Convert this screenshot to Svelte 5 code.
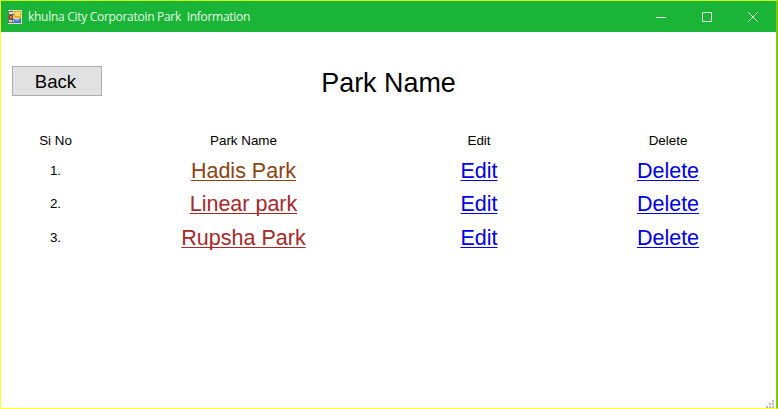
<script>
  const parks = [
    { name: 'Hadis Park', color: '#8b4513', height: 33 },
    { name: 'Linear park', color: '#a52a2a', height: 34 },
    { name: 'Rupsha Park', color: '#a52a2a', height: 33 }
  ];
</script>

<div class="window">
  <header class="titlebar">
    <svg class="app-icon" width="14" height="14" viewBox="0 0 14 14" shape-rendering="crispEdges">
      <rect width="14" height="14" fill="#d5dccb" />
      <path d="M0 1.5H5M.5 1V13M0 4.5H6M0 9.5H6M4.5 9V13M0 12.5H13M12.5 8V13" stroke="#60765a" fill="none" />
      <rect x="1" y="5" width="4" height="4" fill="#b52d20" />
      <rect x="2" y="6" width="2" height="2" fill="#ed7860" />
      <rect x="6" y="1" width="7" height="7" fill="#e9ad20" />
      <rect x="7" y="2" width="5" height="4" fill="#ffda65" />
      <rect x="6" y="9" width="6" height="4" fill="#4270d2" />
      <rect x="7" y="9" width="4" height="2" fill="#86a9f2" />
    </svg>
    <span class="title">khulna City Corporatoin Park&nbsp; Information</span>
    <div class="controls">
      <svg width="10" height="10" viewBox="0 0 10 10"><path d="M0 5.5H10" /></svg>
      <svg width="10" height="10" viewBox="0 0 10 10"><path d="M.5 .5H9.5V9.5H.5Z" /></svg>
      <svg width="10" height="10" viewBox="0 0 10 10"><path d="M.3 .3L9.7 9.7M9.7 .3L.3 9.7" /></svg>
    </div>
  </header>
  <main>
    <div class="top">
      <button>Back</button>
      <h1>Park Name</h1>
    </div>
    <div class="row head">
      <span>Si No</span><span>Park Name</span><span>Edit</span><span>Delete</span>
    </div>
    {#each parks as park, i}
      <div class="row" style:height="{park.height}px">
        <span class="num">{i + 1}.</span>
        <span><a href="#park" style:color={park.color}>{park.name}</a></span>
        <span><a href="#edit">Edit</a></span>
        <span><a href="#delete">Delete</a></span>
      </div>
    {/each}
  </main>
  <svg class="grip" width="8" height="8" viewBox="0 0 8 8" fill="#b8b8b8" shape-rendering="crispEdges">
    <path d="M6 0h2v2h-2zM3 3h2v2h-2zM6 3h2v2h-2zM0 6h2v2h-2zM3 6h2v2h-2zM6 6h2v2h-2z" />
  </svg>
</div>

<style>
  .window {
    position: relative;
    box-sizing: border-box;
    width: 778px;
    height: 409px;
    border: 1px solid #ffff28;
    border-top-color: #cbf51c;
    border-right: 2px solid #7cc80c;
    background: #fff;
    color: #000;
    font-family: "Liberation Sans", Arial, sans-serif;
    overflow: hidden;
  }
  .titlebar {
    display: flex;
    align-items: center;
    box-sizing: border-box;
    height: 31px;
    padding: 0 18px 0 7px;
    background: #1ab436;
  }
  .app-icon { flex: none; }
  .title {
    margin-left: 6px;
    color: #e4f8e6;
    font: 12px/16px "Open Sans", "Noto Sans", sans-serif;
    letter-spacing: -0.29px;
    white-space: nowrap;
  }
  .controls {
    display: flex;
    gap: 36px;
    margin-left: auto;
  }
  .controls svg {
    fill: none;
    stroke: #e4fbe6;
  }
  .top {
    display: grid;
    grid-template-columns: 90px 1fr 90px;
    align-items: start;
    height: 30px;
    padding: 34px 11px 0;
  }
  button {
    width: 90px;
    height: 30px;
    padding: 1px 3px 0 0;
    border: 1px solid #adadad;
    background: #e1e1e1;
    color: #000;
    font: 18.6px/27px "Liberation Sans", Arial, sans-serif;
  }
  h1 {
    margin: 0;
    padding-top: 2px;
    text-align: center;
    font-size: 26.9px;
    line-height: 30px;
    font-weight: 400;
  }
  .row {
    display: grid;
    grid-template-columns: 109px 267px 204px 174px;
    height: 33px;
    text-align: center;
    font-size: 21.5px;
    line-height: 33px;
  }
  .head {
    height: 29px;
    margin-top: 30px;
    font-size: 13.4px;
    line-height: 30px;
  }
  .num {
    font-size: 13.4px;
    line-height: 31px;
  }
  a {
    color: #0000e6;
    text-decoration: underline;
    text-decoration-thickness: 1px;
    text-underline-offset: 2px;
    text-decoration-skip-ink: none;
  }
  .grip {
    position: absolute;
    right: 2px;
    bottom: 0;
  }
</style>
